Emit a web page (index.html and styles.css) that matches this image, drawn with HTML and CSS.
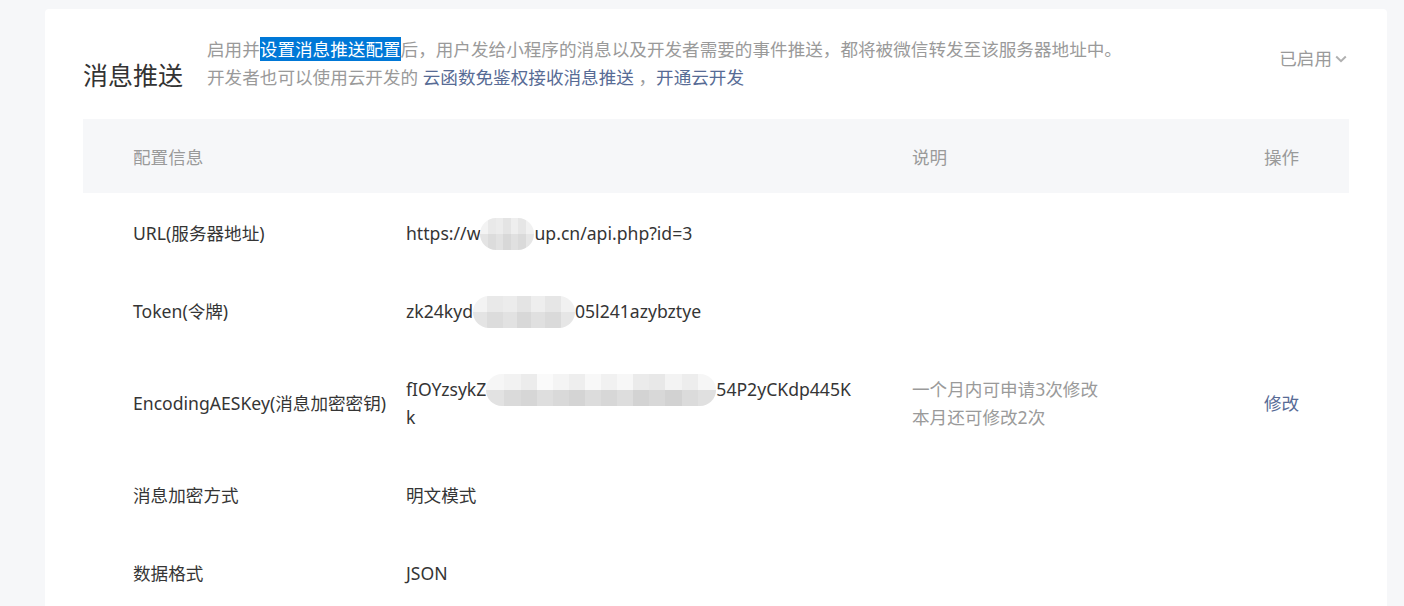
FILE: index.html
```html
<!DOCTYPE html>
<html lang="zh-CN">
<head>
<meta charset="utf-8">
<title>消息推送</title>
<link rel="stylesheet" href="styles.css">
</head>
<body>
<div class="page">
  <section class="card">
    <div class="intro">
      <h2 class="title">消息推送</h2>
      <div class="desc">
        <p>启用并<span class="sel">设置消息推送配置</span>后，用户发给小程序的消息以及开发者需要的事件推送，都将被微信转发至该服务器地址中。</p>
        <p>开发者也可以使用云开发的 <a class="link" href="#">云函数免鉴权接收消息推送</a> ，<a class="link" href="#">开通云开发</a></p>
      </div>
      <div class="status">已启用<svg class="chev" width="12" height="8" viewBox="0 0 12 8"><path d="M1.2 1.5 L6 6.2 L10.8 1.5" fill="none" stroke="#b0b0b0" stroke-width="2"/></svg></div>
    </div>

    <div class="table">
      <div class="row head">
        <div class="c1">配置信息</div>
        <div class="c2"></div>
        <div class="c3">说明</div>
        <div class="c4">操作</div>
      </div>
      <div class="row">
        <div class="c1">URL(服务器地址)</div>
        <div class="c2 val">https://w<span class="mosaic m-url"></span>up.cn/api.php?id=3</div>
        <div class="c3"></div>
        <div class="c4"></div>
      </div>
      <div class="row">
        <div class="c1">Token(令牌)</div>
        <div class="c2 val">zk24kyd<span class="mosaic m-token"></span>05l241azybztye</div>
        <div class="c3"></div>
        <div class="c4"></div>
      </div>
      <div class="row">
        <div class="c1">EncodingAESKey(消息加密密钥)</div>
        <div class="c2 val">fIOYzsykZ<span class="mosaic m-key"></span>54P2yCKdp445Kk</div>
        <div class="c3 note">一个月内可申请3次修改<br>本月还可修改2次</div>
        <div class="c4"><a class="link" href="#">修改</a></div>
      </div>
      <div class="row">
        <div class="c1">消息加密方式</div>
        <div class="c2 val">明文模式</div>
        <div class="c3"></div>
        <div class="c4"></div>
      </div>
      <div class="row">
        <div class="c1">数据格式</div>
        <div class="c2 val">JSON</div>
        <div class="c3"></div>
        <div class="c4"></div>
      </div>
    </div>
  </section>
</div>
</body>
</html>
```

FILE: styles.css
```css
* { box-sizing: border-box; }
html, body { margin: 0; padding: 0; }
body {
  background: #f6f7f9;
  font-family: "Noto Sans", "Noto Sans CJK SC", sans-serif;
  font-size: 17.6px;
  color: #353535;
}
.page {
  padding: 9px 17px 0 45px;
}
.card {
  background: #fff;
  border-radius: 4px;
  padding: 26px 38px 0 38px;
  min-height: 620px;
}
.intro {
  display: flex;
  align-items: flex-end;
}
.title {
  margin: 0 24px 0 0;
  font-size: 25px;
  font-weight: normal;
  line-height: 32px;
  color: #333;
}
.desc {
  flex: 1;
  color: #9a9a9a;
}
.desc p {
  margin: 0;
  line-height: 28px;
  white-space: nowrap;
}
.sel {
  background: #0078d7;
  color: #fff;
}
.link {
  color: #576b95;
  text-decoration: none;
}
.status {
  align-self: flex-start;
  margin-top: 9px;
  line-height: 28px;
  color: #9a9a9a;
  display: flex;
  align-items: center;
  gap: 3px;
  padding-right: 2px;
}
.chev { display: block; margin-top: 1px; }

.table {
  margin-top: 28px;
}
.row {
  display: grid;
  grid-template-columns: 273px 506px 352px 1fr;
  align-items: center;
  padding: 26px 0 24px 50px;
  line-height: 28px;
}
.row.head {
  background: #f6f7f9;
  color: #9a9a9a;
  padding: 24px 0 22px 50px;
}
.val {
  padding-right: 58px;
  word-break: break-all;
}
.note {
  color: #9a9a9a;
}
.mosaic {
  display: inline-block;
  vertical-align: middle;
  height: 32px;
  margin: -8px 0 -6px;
  border-radius: 16px;
  background:
    linear-gradient(90deg, #f3f3f3 0 14%, #e9e9e9 14% 29%, #ececec 29% 43%, #e4e4e4 43% 57%, #eeeeee 57% 71%, #e6e6e6 71% 86%, #f1f1f1 86%) top / 100% 50% no-repeat,
    linear-gradient(90deg, #e4e4e4 0 14%, #dcdcdc 14% 29%, #e2e2e2 29% 43%, #d8d8d8 43% 57%, #e0e0e0 57% 71%, #dadada 71% 86%, #e6e6e6 86%) bottom / 100% 50% no-repeat;
}
.m-url { width: 54px; }
.m-token { width: 102px; }
.m-key {
  width: 230px;
  background:
    linear-gradient(90deg, #f6f6f6 0 8%, #f2f2f2 8% 15%, #ececec 15% 22%, #fafafa 22% 29%, #f4f4f4 29% 36%, #eeeeee 36% 43%, #f8f8f8 43% 50%, #f1f1f1 50% 57%, #f7f7f7 57% 64%, #ebebeb 64% 71%, #e8e8e8 71% 78%, #f3f3f3 78% 85%, #ededed 85% 92%, #f6f6f6 92%) top / 100% 50% no-repeat,
    linear-gradient(90deg, #e2e2e2 0 8%, #dadada 8% 15%, #d6d6d6 15% 22%, #dedede 22% 29%, #d9d9d9 29% 36%, #d4d4d4 36% 43%, #dcdcdc 43% 50%, #d7d7d7 50% 57%, #dddddd 57% 64%, #d3d3d3 64% 71%, #d8d8d8 71% 78%, #d2d2d2 78% 85%, #dbdbdb 85% 92%, #e0e0e0 92%) bottom / 100% 50% no-repeat;
}
```
